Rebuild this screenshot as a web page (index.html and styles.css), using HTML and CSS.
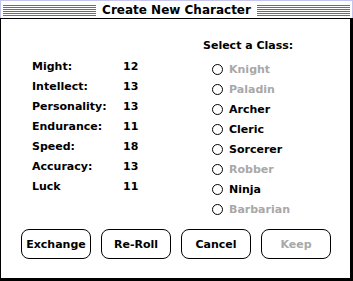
FILE: index.html
```html
<!DOCTYPE html>
<html lang="en">
<head>
    <meta charset="UTF-8">
    <meta name="viewport" content="width=device-width, initial-scale=1.0">
    <link rel="stylesheet" href="styles.css">
</head>
<body>

<div class="window">
    <div class="titlebar">
        <div class="stripes"></div>
        <span class="title">Create New Character</span>
        <div class="stripes"></div>
    </div>

    <div class="dialog">
        <div class="columns">
            <div class="stats">
                <div class="stat"><span class="stat-name">Might:</span><span>12</span></div>
                <div class="stat"><span class="stat-name">Intellect:</span><span>13</span></div>
                <div class="stat"><span class="stat-name">Personality:</span><span>13</span></div>
                <div class="stat"><span class="stat-name">Endurance:</span><span>11</span></div>
                <div class="stat"><span class="stat-name">Speed:</span><span>18</span></div>
                <div class="stat"><span class="stat-name">Accuracy:</span><span>13</span></div>
                <div class="stat"><span class="stat-name">Luck</span><span>11</span></div>
            </div>

            <div class="classes">
                <div class="classes-title">Select a Class:</div>
                <div class="class-option disabled"><span class="radio"></span>Knight</div>
                <div class="class-option disabled"><span class="radio"></span>Paladin</div>
                <div class="class-option"><span class="radio"></span>Archer</div>
                <div class="class-option"><span class="radio"></span>Cleric</div>
                <div class="class-option"><span class="radio"></span>Sorcerer</div>
                <div class="class-option disabled"><span class="radio"></span>Robber</div>
                <div class="class-option"><span class="radio"></span>Ninja</div>
                <div class="class-option disabled"><span class="radio"></span>Barbarian</div>
            </div>
        </div>

        <div class="buttons">
            <button class="btn">Exchange</button>
            <button class="btn">Re-Roll</button>
            <button class="btn">Cancel</button>
            <button class="btn disabled">Keep</button>
        </div>
    </div>
</div>

</body>
</html>
```

FILE: styles.css
```css
body {
    margin: 0;
    padding: 0;
    background: #fff;
    font-family: "DejaVu Sans", sans-serif;
    font-weight: bold;
    font-size: 11px;
    color: #000;
}

.window {
    width: 353px;
    height: 281px;
    display: flex;
    flex-direction: column;
}

.titlebar {
    height: 18px;
    box-sizing: border-box;
    border: 1px solid #c4c4ec;
    border-bottom: none;
    padding: 0 2px;
    display: flex;
    align-items: center;
}

.stripes {
    flex: 1;
    height: 12px;
    background: repeating-linear-gradient(to bottom, #fff 0, #fff 1px, #6e6e6e 1px, #6e6e6e 2px);
}

.title {
    padding: 0 6px;
    font-size: 12px;
    line-height: 16px;
    background: #fff;
}

.dialog {
    flex: 1;
    box-sizing: border-box;
    border-top: 1px solid #000;
    border-left: 1px solid #000;
    border-right: 3px solid #000;
    border-bottom: 3px solid #000;
}

.columns {
    height: 210px;
    display: flex;
}

.stats {
    width: 171px;
    margin-left: 31px;
    padding-top: 38px;
}

.stat {
    display: flex;
    height: 20px;
    line-height: 20px;
}

.stat-name {
    width: 91px;
}

.classes {
    padding-top: 17px;
}

.classes-title {
    line-height: 20px;
    margin-bottom: 3px;
}

.class-option {
    display: flex;
    align-items: center;
    height: 20px;
    padding-left: 9px;
}

.radio {
    width: 9px;
    height: 9px;
    border: 1px solid #000;
    border-radius: 50%;
    margin-right: 6px;
}

.class-option.disabled {
    color: #a8a8a8;
}

.buttons {
    display: flex;
    gap: 10px;
    margin-left: 20px;
}

.btn {
    width: 70px;
    height: 30px;
    padding: 0;
    background: #fff;
    border: 1px solid #000;
    border-radius: 8px;
    font-family: "DejaVu Sans", sans-serif;
    font-weight: bold;
    font-size: 11px;
    color: #000;
}

.btn.disabled {
    color: #a8a8a8;
}
```
